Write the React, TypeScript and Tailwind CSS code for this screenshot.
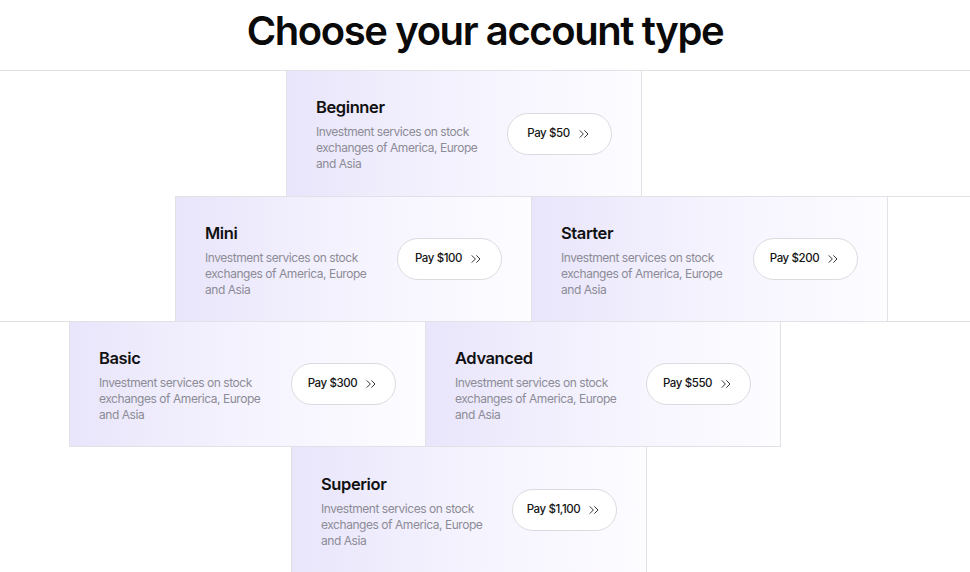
import { ChevronsRight } from "lucide-react";

type Plan = {
  name: string;
  price: string;
};

const PlanCard = ({ plan, className }: { plan: Plan; className: string }) => {
  return (
    <div
      className={`flex w-[356px] shrink-0 items-center justify-between border-[#e2e2e6] bg-linear-to-r from-[#e9e5fb] via-[#f5f3fe] to-[#fdfcff] pl-[29px] pr-[29px] ${className}`}
    >
      <div className="flex flex-col">
        <h3 className="text-[16.5px] font-semibold leading-6 tracking-[-0.4px] text-[#111]">
          {plan.name}
        </h3>
        <p className="mt-[5px] w-[168px] text-[12px] leading-4 tracking-[-0.45px] text-[#8c8c96]">
          Investment services on stock exchanges of America, Europe and Asia
        </p>
      </div>
      <button className="flex h-[42px] w-[105px] shrink-0 items-center justify-center gap-[6px] whitespace-nowrap rounded-full border border-[#dcdce0] bg-white text-[11.5px] font-medium tracking-[-0.4px] text-[#151515]">
        Pay {plan.price}
        <ChevronsRight size={16} strokeWidth={1.3} />
      </button>
    </div>
  );
};

export default function App() {
  return (
    <div className="h-[572px] w-[970px] overflow-hidden bg-white font-['Inter',sans-serif]">
      <div className="flex h-[70px] justify-center pt-[6px]">
        <h1 className="text-[40px] font-semibold leading-[50px] tracking-[-1.4px] text-[#0a0a0a]">
          Choose your account type
        </h1>
      </div>

      {/* row 1 */}
      <div className="flex h-[126px] border-t border-[#e2e2e6]">
        <PlanCard
          plan={{ name: "Beginner", price: "$50" }}
          className="ml-[286px] border-x"
        />
      </div>

      {/* row 2 */}
      <div className="flex h-[125px] pl-[175px]">
        <PlanCard plan={{ name: "Mini", price: "$100" }} className="border-l border-t" />
        <PlanCard plan={{ name: "Starter", price: "$200" }} className="border-l border-t" />
        <div className="flex-1 border-l border-t border-[#e2e2e6]" />
      </div>

      {/* row 3 */}
      <div className="flex h-[126px] border-t border-[#e2e2e6] pl-[69px]">
        <PlanCard plan={{ name: "Basic", price: "$300" }} className="border-b border-l" />
        <PlanCard plan={{ name: "Advanced", price: "$550" }} className="border-x border-b" />
      </div>

      {/* row 4 */}
      <div className="flex h-[126px] pl-[291px]">
        <PlanCard plan={{ name: "Superior", price: "$1,100" }} className="border-x" />
      </div>
    </div>
  );
}
